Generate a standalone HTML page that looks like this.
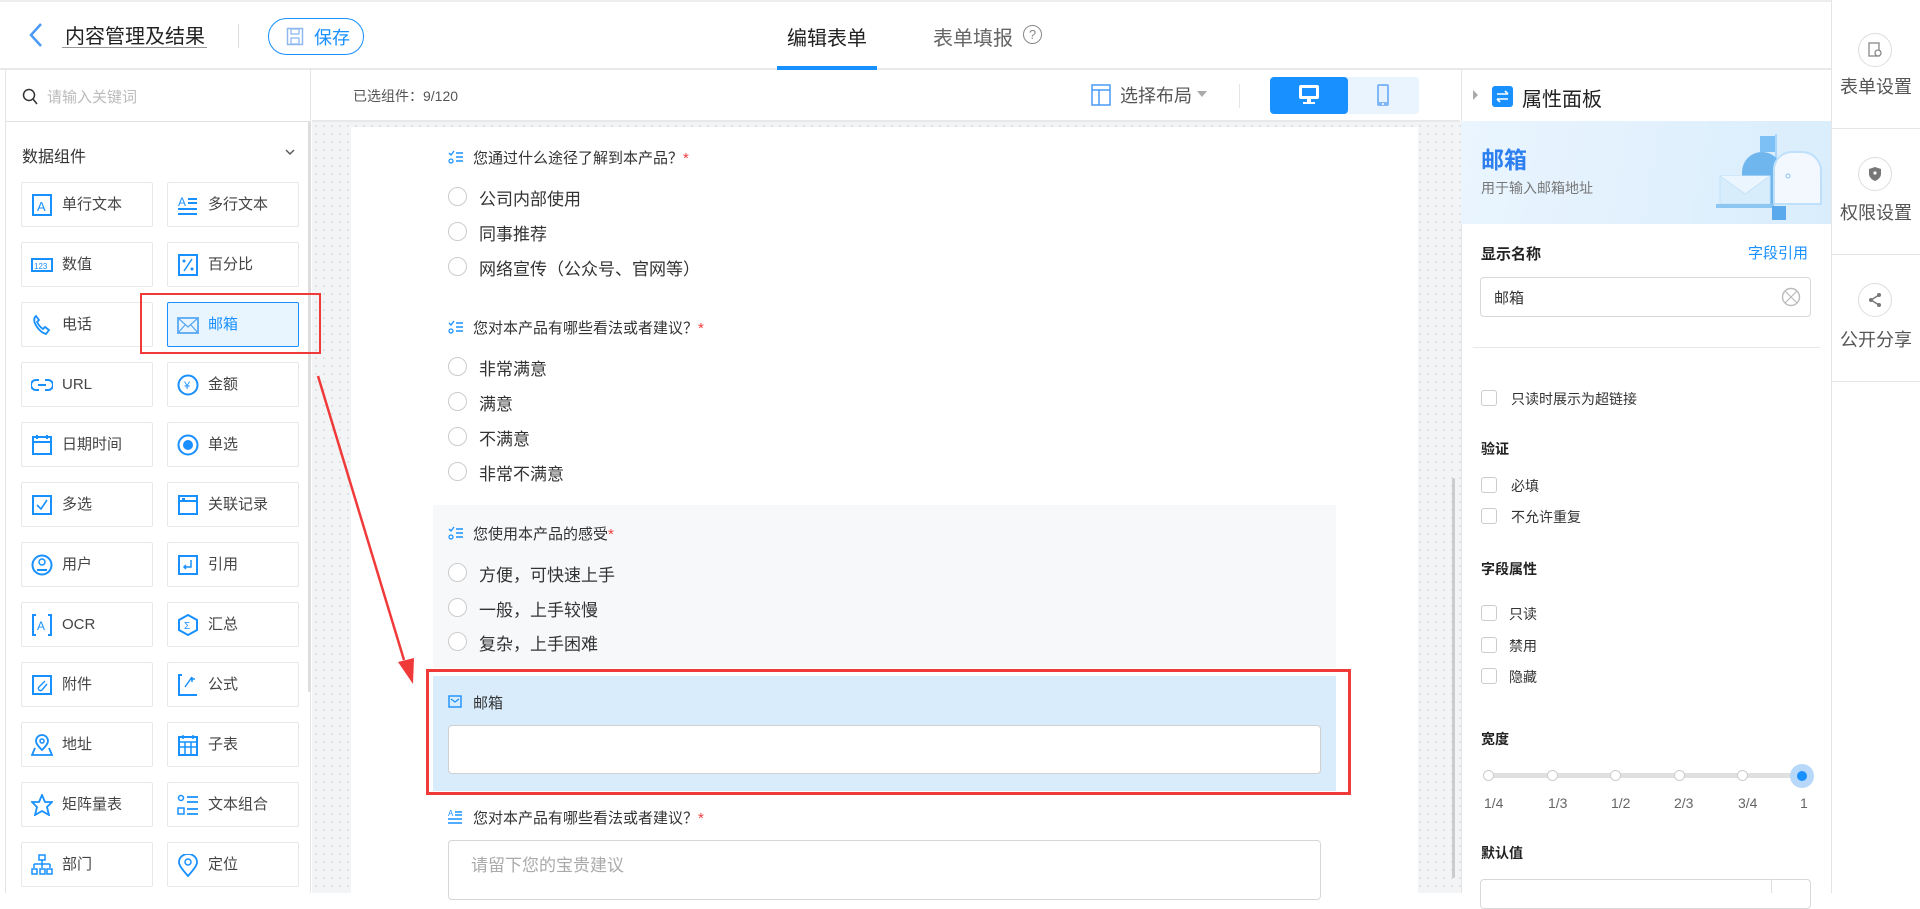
<!DOCTYPE html>
<html><head><meta charset="utf-8"><style>
*{box-sizing:border-box;margin:0;padding:0}
body{width:1920px;height:893px;overflow:hidden;background:#fff;font-family:"Liberation Sans","Noto Sans CJK SC",sans-serif;color:#333;position:relative}
.a{position:absolute}
.card{position:absolute;width:132px;height:45px;border:1px solid #e8e8e8;border-radius:2px;background:#fff;font-size:15px;color:#444;line-height:43px;padding-left:40px}
.card svg{position:absolute;left:9px;top:11px}
.radio{position:absolute;width:19px;height:19px;border:1px solid #ccc;border-radius:50%;background:#fff}
.opt{position:absolute;font-size:17px;color:#333}
.lbl{position:absolute;font-size:15px;color:#333}
.star{color:#f04040}
.cb{position:absolute;width:16px;height:16px;border:1px solid #ccc;border-radius:3px;background:#fff}
.pt{position:absolute;font-size:14px;color:#333}
.ph{position:absolute;font-size:14px;font-weight:bold;color:#222}
</style></head><body>
<!-- top header -->
<div class="a" style="left:0;top:0;width:1831px;height:70px;border-top:2px solid #eee;border-bottom:2px solid #e8e8e8;background:#fff"></div>
<svg class="a" style="left:28px;top:22px" width="16" height="26"><path d="M13 2 L3 13 L13 24" stroke="#4a9af5" stroke-width="2.5" fill="none"/></svg>
<div class="a" style="left:65px;top:20px;font-size:20px;color:#222">内容管理及结果</div>
<div class="a" style="left:62px;top:47px;width:145px;height:1px;background:#999"></div>
<div class="a" style="left:238px;top:24px;width:1px;height:24px;background:#ddd"></div>
<div class="a" style="left:268px;top:18px;width:96px;height:37px;border:1px solid #1890ff;border-radius:19px"></div>
<svg class="a" style="left:286px;top:27px" width="18" height="19"><rect x="1.5" y="1.5" width="15" height="16" fill="none" stroke="#8fb8f0" stroke-width="1.5"/><rect x="5" y="2" width="8" height="5" fill="none" stroke="#8fb8f0" stroke-width="1.3"/><rect x="5" y="11" width="8" height="6" fill="none" stroke="#8fb8f0" stroke-width="1.3"/></svg>
<div class="a" style="left:314px;top:24px;font-size:18px;color:#1890ff">保存</div>
<div class="a" style="left:787px;top:22px;font-size:20px;color:#222">编辑表单</div>
<div class="a" style="left:777px;top:66px;width:100px;height:4px;background:#1890ff"></div>
<div class="a" style="left:933px;top:22px;font-size:20px;color:#666">表单填报</div>
<div class="a" style="left:1023px;top:25px;width:19px;height:19px;border:1.5px solid #888;border-radius:50%;font-size:13px;color:#888;text-align:center;line-height:17px">?</div>

<!-- right sidebar -->
<div class="a" style="left:1831px;top:0;width:89px;height:893px;border-left:1px solid #e5e5e5;background:#fff"></div>
<div class="a" style="left:1831px;top:128px;width:89px;height:1px;background:#e5e5e5"></div>
<div class="a" style="left:1831px;top:254px;width:89px;height:1px;background:#e5e5e5"></div>
<div class="a" style="left:1831px;top:381px;width:89px;height:1px;background:#e5e5e5"></div>
<div class="a" style="left:1858px;top:33px;width:34px;height:34px;border:1.5px solid #ddd;border-radius:50%"></div>
<svg class="a" style="left:1867px;top:42px" width="16" height="16"><rect x="2" y="1" width="10" height="13" fill="none" stroke="#888" stroke-width="1.3"/><circle cx="11" cy="11" r="3" fill="#fff" stroke="#888" stroke-width="1.3"/></svg>
<div class="a" style="left:1840px;top:73px;font-size:18px;color:#555">表单设置</div>
<div class="a" style="left:1858px;top:157px;width:34px;height:34px;border:1.5px solid #ddd;border-radius:50%"></div>
<svg class="a" style="left:1867px;top:166px" width="16" height="16"><path d="M8 1 L14 3 V8 C14 11 11 14 8 15 C5 14 2 11 2 8 V3 Z" fill="#777"/><circle cx="8" cy="7" r="1.6" fill="#fff"/></svg>
<div class="a" style="left:1840px;top:199px;font-size:18px;color:#555">权限设置</div>
<div class="a" style="left:1858px;top:283px;width:34px;height:34px;border:1.5px solid #ddd;border-radius:50%"></div>
<svg class="a" style="left:1867px;top:292px" width="16" height="16"><circle cx="12" cy="3" r="2" fill="#777"/><circle cx="4" cy="8" r="2" fill="#777"/><circle cx="12" cy="13" r="2" fill="#777"/><path d="M12 3 L4 8 L12 13" stroke="#777" stroke-width="1.4" fill="none"/></svg>
<div class="a" style="left:1840px;top:326px;font-size:18px;color:#555">公开分享</div>

<!-- left panel -->
<div class="a" style="left:5px;top:70px;width:306px;height:823px;border-left:1px solid #e5e5e5;border-right:1px solid #e5e5e5;background:#fff"></div>
<div class="a" style="left:6px;top:121px;width:304px;height:1px;background:#e0e0e0"></div>
<svg class="a" style="left:22px;top:88px" width="16" height="18"><circle cx="7" cy="7" r="5.5" fill="none" stroke="#333" stroke-width="1.5"/><path d="M11 11 L15 16" stroke="#333" stroke-width="1.5"/></svg>
<div class="a" style="left:47px;top:86px;font-size:15px;color:#bbb">请输入关键词</div>
<div class="a" style="left:22px;top:143px;font-size:16px;color:#333">数据组件</div>
<svg class="a" style="left:284px;top:147px" width="12" height="10"><path d="M2 3 L6 7 L10 3" stroke="#555" stroke-width="1.4" fill="none"/></svg>
<div class="a" style="left:308px;top:122px;width:3px;height:570px;background:#ddd;border-radius:2px"></div>

<div class="card" style="left:21px;top:182px"><svg width="22" height="22"><rect x="2" y="1" width="18" height="20" fill="none" stroke="#1890ff" stroke-width="2"/><text x="6" y="17" font-size="13" fill="#1890ff" font-family="Liberation Sans">A</text></svg>单行文本</div>
<div class="card" style="left:167px;top:182px"><svg width="22" height="22"><text x="1" y="12" font-size="12" fill="#1890ff" font-family="Liberation Sans">A</text><path d="M11 5h9M11 9h9M1 15h19M1 20h19" stroke="#1890ff" stroke-width="2"/></svg>多行文本</div>
<div class="card" style="left:21px;top:242px"><svg width="22" height="22"><rect x="1" y="5" width="20" height="12" fill="none" stroke="#1890ff" stroke-width="2"/><text x="3" y="15" font-size="8" fill="#1890ff">123</text></svg>数值</div>
<div class="card" style="left:167px;top:242px"><svg width="22" height="22"><rect x="2" y="1" width="18" height="20" fill="none" stroke="#1890ff" stroke-width="2"/><path d="M15 5 L7 17" stroke="#1890ff" stroke-width="1.5"/><circle cx="7" cy="7" r="1.5" fill="#1890ff"/><circle cx="15" cy="15" r="1.5" fill="#1890ff"/></svg>百分比</div>
<div class="card" style="left:21px;top:302px"><svg width="22" height="22"><path d="M4 3 C1 8 8 18 15 20 L18 16 L14 13 L12 15 C9 13 7 10 6 8 L8 6 L5 2 Z" fill="none" stroke="#1890ff" stroke-width="1.8"/></svg>电话</div>
<div class="card" style="left:167px;top:302px;background:#e9f5fe;border-color:#1890ff;color:#1890ff"><svg width="22" height="22"><rect x="1" y="4" width="20" height="15" fill="none" stroke="#5aa9f5" stroke-width="1.8"/><path d="M1 4 L11 13 L21 4 M1 19 L8 11 M21 19 L14 11" stroke="#5aa9f5" stroke-width="1.3" fill="none"/></svg>邮箱</div>
<div class="card" style="left:21px;top:362px"><svg width="22" height="22"><path d="M8 6 H5 A5 5 0 0 0 5 16 H8 M14 6 H17 A5 5 0 0 1 17 16 H14 M7 11 H15" stroke="#1890ff" stroke-width="2" fill="none"/></svg>URL</div>
<div class="card" style="left:167px;top:362px"><svg width="22" height="22"><circle cx="11" cy="11" r="9.5" fill="none" stroke="#1890ff" stroke-width="2"/><text x="7" y="15" font-size="11" fill="#1890ff">¥</text></svg>金额</div>
<div class="card" style="left:21px;top:422px"><svg width="22" height="22"><rect x="2" y="3" width="18" height="17" fill="none" stroke="#1890ff" stroke-width="2"/><path d="M2 8h18M6 1v4M16 1v4" stroke="#1890ff" stroke-width="2"/></svg>日期时间</div>
<div class="card" style="left:167px;top:422px"><svg width="22" height="22"><circle cx="11" cy="11" r="9.5" fill="none" stroke="#1890ff" stroke-width="2"/><circle cx="11" cy="11" r="5" fill="#1890ff"/></svg>单选</div>
<div class="card" style="left:21px;top:482px"><svg width="22" height="22"><rect x="2" y="2" width="18" height="18" fill="none" stroke="#1890ff" stroke-width="2"/><path d="M6 11 L10 15 L16 6" stroke="#1890ff" stroke-width="1.6" fill="none"/></svg>多选</div>
<div class="card" style="left:167px;top:482px"><svg width="22" height="22"><rect x="2" y="2" width="18" height="18" fill="none" stroke="#1890ff" stroke-width="2"/><path d="M2 7h18M5 5h3" stroke="#1890ff" stroke-width="2"/></svg>关联记录</div>
<div class="card" style="left:21px;top:542px"><svg width="22" height="22"><circle cx="11" cy="11" r="9.5" fill="none" stroke="#1890ff" stroke-width="2"/><circle cx="11" cy="8" r="3" fill="none" stroke="#1890ff" stroke-width="1.5"/><path d="M6 16 H16" stroke="#1890ff" stroke-width="2"/></svg>用户</div>
<div class="card" style="left:167px;top:542px"><svg width="22" height="22"><rect x="2" y="2" width="18" height="18" fill="none" stroke="#1890ff" stroke-width="2"/><path d="M14 6 V13 H7 M9 11 L7 13 L9 15" stroke="#1890ff" stroke-width="1.5" fill="none"/></svg>引用</div>
<div class="card" style="left:21px;top:602px"><svg width="22" height="22"><path d="M5 1 H2 V21 H5 M17 1 H20 V21 H17" stroke="#1890ff" stroke-width="2" fill="none"/><text x="6" y="16" font-size="12" fill="#1890ff">A</text></svg>OCR</div>
<div class="card" style="left:167px;top:602px"><svg width="22" height="22"><path d="M11 1 L20 6 V16 L11 21 L2 16 V6 Z" fill="none" stroke="#1890ff" stroke-width="2"/><text x="7" y="15" font-size="10" fill="#1890ff">Σ</text></svg>汇总</div>
<div class="card" style="left:21px;top:662px"><svg width="22" height="22"><rect x="2" y="2" width="18" height="18" fill="none" stroke="#1890ff" stroke-width="2"/><path d="M14 7 L8 13 A2 2 0 0 0 11 16 L16 10" stroke="#1890ff" stroke-width="1.4" fill="none"/></svg>附件</div>
<div class="card" style="left:167px;top:662px"><svg width="22" height="22"><path d="M5 1 H2 V21 H20" stroke="#1890ff" stroke-width="2" fill="none"/><path d="M15 3 L8 13 M13 5h5M15 3v5" stroke="#1890ff" stroke-width="1.5"/></svg>公式</div>
<div class="card" style="left:21px;top:722px"><svg width="22" height="22"><path d="M11 16 C6 11 5 9 5 7 A6 6 0 0 1 17 7 C17 9 16 11 11 16 Z" fill="none" stroke="#1890ff" stroke-width="1.8"/><circle cx="11" cy="7" r="2" fill="none" stroke="#1890ff" stroke-width="1.5"/><path d="M4 14 L1 21 H21 L18 14" stroke="#1890ff" stroke-width="1.8" fill="none"/></svg>地址</div>
<div class="card" style="left:167px;top:722px"><svg width="22" height="22"><rect x="2" y="3" width="18" height="18" fill="none" stroke="#1890ff" stroke-width="2"/><path d="M2 8h18M2 13h18M8 8v13M14 8v13M6 1v4M16 1v4" stroke="#1890ff" stroke-width="1.5"/></svg>子表</div>
<div class="card" style="left:21px;top:782px"><svg width="22" height="22"><path d="M11 1 L14 8 L21 8 L16 13 L18 21 L11 17 L4 21 L6 13 L1 8 L8 8 Z" fill="none" stroke="#1890ff" stroke-width="1.8"/></svg>矩阵量表</div>
<div class="card" style="left:167px;top:782px"><svg width="22" height="22"><circle cx="4" cy="4" r="2.5" fill="none" stroke="#1890ff" stroke-width="1.5"/><rect x="1" y="14" width="6" height="6" fill="none" stroke="#1890ff" stroke-width="1.5"/><path d="M10 3h11M10 8h11M10 15h11M10 20h11" stroke="#1890ff" stroke-width="1.8"/></svg>文本组合</div>
<div class="card" style="left:21px;top:842px"><svg width="22" height="22"><rect x="8" y="1" width="6" height="5" fill="none" stroke="#1890ff" stroke-width="1.5"/><path d="M11 6v4M3 10h16M3 10v4M11 10v4M19 10v4" stroke="#1890ff" stroke-width="1.5"/><rect x="1" y="15" width="5" height="5" fill="none" stroke="#1890ff" stroke-width="1.5"/><rect x="9" y="15" width="5" height="5" fill="none" stroke="#1890ff" stroke-width="1.5"/><rect x="16" y="15" width="5" height="5" fill="none" stroke="#1890ff" stroke-width="1.5"/></svg>部门</div>
<div class="card" style="left:167px;top:842px"><svg width="22" height="24"><path d="M11 22 C4 14 2 11 2 8 A9 8 0 0 1 20 8 C20 11 18 14 11 22 Z" fill="none" stroke="#1890ff" stroke-width="1.8"/><circle cx="11" cy="8" r="3" fill="none" stroke="#1890ff" stroke-width="1.5"/></svg>定位</div>

<!-- canvas -->
<div class="a" style="left:312px;top:70px;width:1148px;height:52px;background:#fff;border-bottom:2px solid #e8e8e8"></div>
<div class="a" style="left:353px;top:86px;font-size:14px;color:#555">已选组件：9/120</div>
<svg class="a" style="left:1091px;top:84px" width="20" height="22"><rect x="1" y="1" width="18" height="20" fill="none" stroke="#4a9af5" stroke-width="1.5"/><path d="M1 6h18M8 6v15" stroke="#4a9af5" stroke-width="1.5"/></svg>
<div class="a" style="left:1120px;top:82px;font-size:18px;color:#555">选择布局</div>
<svg class="a" style="left:1197px;top:91px" width="10" height="8"><path d="M0 0 H10 L5 6 Z" fill="#aaa"/></svg>
<div class="a" style="left:1239px;top:84px;width:1px;height:24px;background:#e5e5e5"></div>
<div class="a" style="left:1270px;top:77px;width:149px;height:37px;background:#eaf4ff;border-radius:4px"></div>
<div class="a" style="left:1270px;top:77px;width:78px;height:37px;background:#1890ff;border-radius:4px"></div>
<svg class="a" style="left:1297px;top:84px" width="24" height="22"><rect x="2" y="1" width="20" height="14" rx="2" fill="#fff"/><rect x="5" y="4" width="14" height="8" fill="#1890ff"/><rect x="10" y="15" width="4" height="3" fill="#fff"/><rect x="6" y="18" width="12" height="2" fill="#fff"/></svg>
<svg class="a" style="left:1376px;top:83px" width="14" height="24"><rect x="1" y="1" width="12" height="22" rx="2" fill="#7fb8f5"/><rect x="3" y="3" width="8" height="16" fill="#e8f2fe"/><circle cx="7" cy="21" r="1" fill="#fff"/></svg>

<div class="a" style="left:312px;top:122px;width:1149px;height:771px;background-color:#f3f4f6;background-image:radial-gradient(#dfe1e5 1px,transparent 1.2px);background-size:8px 8px"></div>
<div class="a" style="left:351px;top:127px;width:1067px;height:766px;background:#fff"></div>
<div class="a" style="left:1452px;top:478px;width:3px;height:400px;background:#ccc;border-radius:2px"></div>

<!-- red box on left card (above canvas) -->
<div class="a" style="left:140px;top:293px;width:181px;height:61px;border:2.5px solid #f03a3a"></div>

<!-- Q1 -->
<svg class="a" style="left:448px;top:150px" width="15" height="14"><path d="M1 3 L3 5 L6 1" stroke="#1890ff" stroke-width="1.3" fill="none"/><circle cx="3" cy="11" r="2" fill="none" stroke="#1890ff" stroke-width="1.2"/><path d="M8 3h7M8 7h7M8 11h7" stroke="#1890ff" stroke-width="1.4"/></svg>
<div class="lbl" style="left:473px;top:147px">您通过什么途径了解到本产品？<span class="star">*</span></div>
<div class="radio" style="left:448px;top:187px"></div><div class="opt" style="left:479px;top:185px">公司内部使用</div>
<div class="radio" style="left:448px;top:222px"></div><div class="opt" style="left:479px;top:220px">同事推荐</div>
<div class="radio" style="left:448px;top:257px"></div><div class="opt" style="left:479px;top:255px">网络宣传（公众号、官网等）</div>
<!-- Q2 -->
<svg class="a" style="left:448px;top:320px" width="15" height="14"><path d="M1 3 L3 5 L6 1" stroke="#1890ff" stroke-width="1.3" fill="none"/><circle cx="3" cy="11" r="2" fill="none" stroke="#1890ff" stroke-width="1.2"/><path d="M8 3h7M8 7h7M8 11h7" stroke="#1890ff" stroke-width="1.4"/></svg>
<div class="lbl" style="left:473px;top:317px">您对本产品有哪些看法或者建议？<span class="star">*</span></div>
<div class="radio" style="left:448px;top:357px"></div><div class="opt" style="left:479px;top:355px">非常满意</div>
<div class="radio" style="left:448px;top:392px"></div><div class="opt" style="left:479px;top:390px">满意</div>
<div class="radio" style="left:448px;top:427px"></div><div class="opt" style="left:479px;top:425px">不满意</div>
<div class="radio" style="left:448px;top:462px"></div><div class="opt" style="left:479px;top:460px">非常不满意</div>
<!-- Q3 -->
<div class="a" style="left:433px;top:505px;width:903px;height:163px;background:#f7f8fa"></div>
<svg class="a" style="left:448px;top:526px" width="15" height="14"><path d="M1 3 L3 5 L6 1" stroke="#1890ff" stroke-width="1.3" fill="none"/><circle cx="3" cy="11" r="2" fill="none" stroke="#1890ff" stroke-width="1.2"/><path d="M8 3h7M8 7h7M8 11h7" stroke="#1890ff" stroke-width="1.4"/></svg>
<div class="lbl" style="left:473px;top:523px">您使用本产品的感受<span class="star">*</span></div>
<div class="radio" style="left:448px;top:563px"></div><div class="opt" style="left:479px;top:561px">方便，可快速上手</div>
<div class="radio" style="left:448px;top:598px"></div><div class="opt" style="left:479px;top:596px">一般，上手较慢</div>
<div class="radio" style="left:448px;top:632px"></div><div class="opt" style="left:479px;top:630px">复杂，上手困难</div>
<!-- email selected -->
<div class="a" style="left:433px;top:676px;width:903px;height:115px;background:#d9ecfc"></div>
<div class="a" style="left:426px;top:669px;width:925px;height:126px;border:3px solid #f03a3a"></div>
<svg class="a" style="left:448px;top:695px" width="14" height="13"><rect x="1" y="1" width="12" height="11" fill="none" stroke="#1890ff" stroke-width="1.4"/><path d="M3 4 L7 7 L11 4" stroke="#1890ff" stroke-width="1.2" fill="none"/></svg>
<div class="lbl" style="left:473px;top:692px">邮箱</div>
<div class="a" style="left:448px;top:725px;width:873px;height:49px;background:#fff;border:1px solid #d0d0d0;border-radius:4px"></div>
<!-- Q4 -->
<svg class="a" style="left:448px;top:809px" width="14" height="16"><text x="0" y="7" font-size="8" fill="#1890ff">A</text><path d="M7 3h7M7 6h7M0 10h14M0 14h14" stroke="#1890ff" stroke-width="1.4"/></svg>
<div class="lbl" style="left:473px;top:807px">您对本产品有哪些看法或者建议？<span class="star">*</span></div>
<div class="a" style="left:448px;top:840px;width:873px;height:60px;background:#fff;border:1px solid #d6d6d6;border-radius:4px"></div>
<div class="a" style="left:471px;top:851px;font-size:17px;color:#aaa">请留下您的宝贵建议</div>

<!-- red arrow -->
<svg class="a" style="left:0;top:0" width="1920" height="893"><path d="M318 376 L404 660" stroke="#f03a3a" stroke-width="2.5"/><path d="M398 662 L413 684 L414 658 Z" fill="#f03a3a"/></svg>

<!-- properties panel -->
<div class="a" style="left:1461px;top:70px;width:370px;height:823px;background:#fff;border-left:1px solid #e5e5e5"></div>
<svg class="a" style="left:1472px;top:89px" width="8" height="12"><path d="M1 1 L6 6 L1 11 Z" fill="#aaa"/></svg>
<div class="a" style="left:1492px;top:86px;width:21px;height:21px;background:#1890ff;border-radius:3px"></div>
<svg class="a" style="left:1492px;top:86px" width="21" height="21"><path d="M5 8h11M13 5l3 3M16 13H5M8 16l-3-3" stroke="#fff" stroke-width="1.6" fill="none"/></svg>
<div class="a" style="left:1522px;top:83px;font-size:20px;color:#222">属性面板</div>
<div class="a" style="left:1461px;top:121px;width:370px;height:103px;background:linear-gradient(100deg,#eaf5fe 0%,#e0f0fd 60%,#d9edfc 100%)"></div>
<div class="a" style="left:1481px;top:141px;font-size:23px;font-weight:bold;color:#2d7ff0">邮箱</div>
<div class="a" style="left:1481px;top:178px;font-size:14px;color:#777">用于输入邮箱地址</div>
<svg class="a" style="left:1706px;top:130px" width="118" height="94"><rect x="54" y="6" width="16" height="16" fill="#7cc0f5"/><rect x="69" y="4" width="2" height="46" fill="#a9d6fa"/><path d="M36 74 V42 A20 20 0 0 1 76 42 V74 Z" fill="#6fb5ee"/><path d="M68 74 V38 A18 18 0 0 1 86 22 H96 A19 19 0 0 1 115 41 V74 Z" fill="#f2f8fe" stroke="#bfe0fb" stroke-width="2"/><circle cx="82" cy="46" r="2" fill="none" stroke="#8cc6f3"/><rect x="14" y="46" width="50" height="28" fill="#d8edfc" stroke="#c5e2fa"/><path d="M14 46 L39 64 L64 46" fill="#eaf5fe" stroke="#c5e2fa"/><rect x="10" y="74" width="58" height="4" fill="#8cc6f3"/><rect x="66" y="76" width="14" height="14" fill="#5aa9ec"/></svg>
<div class="ph" style="left:1481px;top:243px;font-size:15px">显示名称</div>
<div class="a" style="left:1748px;top:242px;font-size:15px;color:#1890ff">字段引用</div>
<div class="a" style="left:1480px;top:277px;width:331px;height:40px;border:1px solid #d8d8d8;border-radius:4px"></div>
<div class="a" style="left:1494px;top:287px;font-size:15px;color:#333">邮箱</div>
<svg class="a" style="left:1781px;top:287px" width="20" height="20"><circle cx="10" cy="10" r="8.5" fill="none" stroke="#bbb" stroke-width="1.4"/><path d="M4 4 L16 16 M16 4 L4 16" stroke="#bbb" stroke-width="1.2"/></svg>
<div class="a" style="left:1473px;top:347px;width:347px;height:1px;background:#e8e8e8"></div>
<div class="cb" style="left:1481px;top:390px"></div><div class="pt" style="left:1511px;top:389px">只读时展示为超链接</div>
<div class="ph" style="left:1481px;top:439px">验证</div>
<div class="cb" style="left:1481px;top:477px"></div><div class="pt" style="left:1511px;top:476px">必填</div>
<div class="cb" style="left:1481px;top:508px"></div><div class="pt" style="left:1511px;top:507px">不允许重复</div>
<div class="ph" style="left:1481px;top:559px">字段属性</div>
<div class="cb" style="left:1481px;top:605px"></div><div class="pt" style="left:1509px;top:604px">只读</div>
<div class="cb" style="left:1481px;top:637px"></div><div class="pt" style="left:1509px;top:636px">禁用</div>
<div class="cb" style="left:1481px;top:668px"></div><div class="pt" style="left:1509px;top:667px">隐藏</div>
<div class="ph" style="left:1481px;top:729px">宽度</div>
<div class="a" style="left:1489px;top:773px;width:315px;height:5px;background:#e0e0e0;border-radius:3px"></div>
<div class="a" style="left:1483px;top:770px;width:11px;height:11px;border:1px solid #ccc;border-radius:50%;background:#fff"></div>
<div class="a" style="left:1547px;top:770px;width:11px;height:11px;border:1px solid #ccc;border-radius:50%;background:#fff"></div>
<div class="a" style="left:1610px;top:770px;width:11px;height:11px;border:1px solid #ccc;border-radius:50%;background:#fff"></div>
<div class="a" style="left:1674px;top:770px;width:11px;height:11px;border:1px solid #ccc;border-radius:50%;background:#fff"></div>
<div class="a" style="left:1737px;top:770px;width:11px;height:11px;border:1px solid #ccc;border-radius:50%;background:#fff"></div>
<div class="a" style="left:1790px;top:764px;width:24px;height:24px;border-radius:50%;background:#b7d8f8"></div>
<div class="a" style="left:1797px;top:771px;width:10px;height:10px;border-radius:50%;background:#1890ff"></div>
<div class="pt" style="left:1484px;top:795px;color:#666">1/4</div>
<div class="pt" style="left:1548px;top:795px;color:#666">1/3</div>
<div class="pt" style="left:1611px;top:795px;color:#666">1/2</div>
<div class="pt" style="left:1674px;top:795px;color:#666">2/3</div>
<div class="pt" style="left:1738px;top:795px;color:#666">3/4</div>
<div class="pt" style="left:1800px;top:795px;color:#666">1</div>
<div class="ph" style="left:1481px;top:843px">默认值</div>
<div class="a" style="left:1480px;top:879px;width:331px;height:30px;border:1px solid #d8d8d8;border-radius:4px"></div>
<div class="a" style="left:1771px;top:879px;width:1px;height:14px;background:#ddd"></div>
</body></html>
